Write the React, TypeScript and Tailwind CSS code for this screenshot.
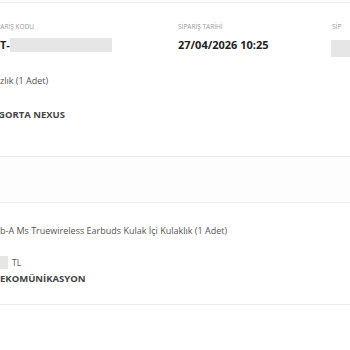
import React from "react";

const App = () => {
  return (
    <div className="w-[350px] h-[350px] overflow-hidden bg-white font-['Open_Sans',sans-serif]">
      {/* Order header */}
      <div className="mt-[2px] border-t border-[#ececec] h-[155px] border-b">
        <div className="flex pt-[20px]">
          <div className="w-[178px] shrink-0">
            <p className="-ml-[9px] text-[6.5px] leading-[8px] text-[#9a9a9a] uppercase whitespace-nowrap">Sİparİş Kodu</p>
            <div className="mt-[7px] flex items-center">
              <span className="text-[11px] leading-[14px] font-bold text-[#222]">T-</span>
              <span className="inline-block w-[102px] h-[14px] bg-[#e6e6e6]"></span>
            </div>
          </div>
          <div className="w-[153px] shrink-0">
            <p className="text-[6.5px] leading-[8px] text-[#9a9a9a] uppercase">Sİparİş Tarİhİ</p>
            <p className="mt-[7px] text-[11px] leading-[14px] font-bold text-[#222]">27/04/2026 10:25</p>
          </div>
          <div className="shrink-0">
            <p className="ml-[1px] text-[6.5px] leading-[8px] text-[#9a9a9a] uppercase">Sİp</p>
            <div className="mt-[9px] w-[60px] h-[17px] bg-[#e6e6e6]"></div>
          </div>
        </div>
        <p className="mt-[18px] text-[9px] leading-[12px] text-[#555]">zlık (1 Adet)</p>
        <p className="mt-[22px] -ml-[2px] text-[9.5px] leading-[12px] font-bold text-[#444]">GORTA NEXUS</p>
      </div>
      {/* Empty band */}
      <div className="h-[46px] bg-[#fdfdfd] border-b border-[#f0f0f0]"></div>
      {/* Second product */}
      <div className="h-[102px] pt-[22px] border-b border-[#ececec]">
        <p className="text-[9px] leading-[12px] text-[#555]">
          b-A Ms Truewireless Earbuds Kulak İçi Kulaklık (1 Adet)
        </p>
        <div className="mt-[19px] flex items-center">
          <span className="inline-block w-[8px] h-[13px] bg-[#e6e6e6]"></span>
          <span className="ml-[4px] text-[8.5px] leading-[12px] text-[#555]">TL</span>
        </div>
        <p className="mt-[4px] text-[9.5px] leading-[12px] font-bold text-[#444]">EKOMÜNİKASYON</p>
      </div>
    </div>
  );
};

export default App;
